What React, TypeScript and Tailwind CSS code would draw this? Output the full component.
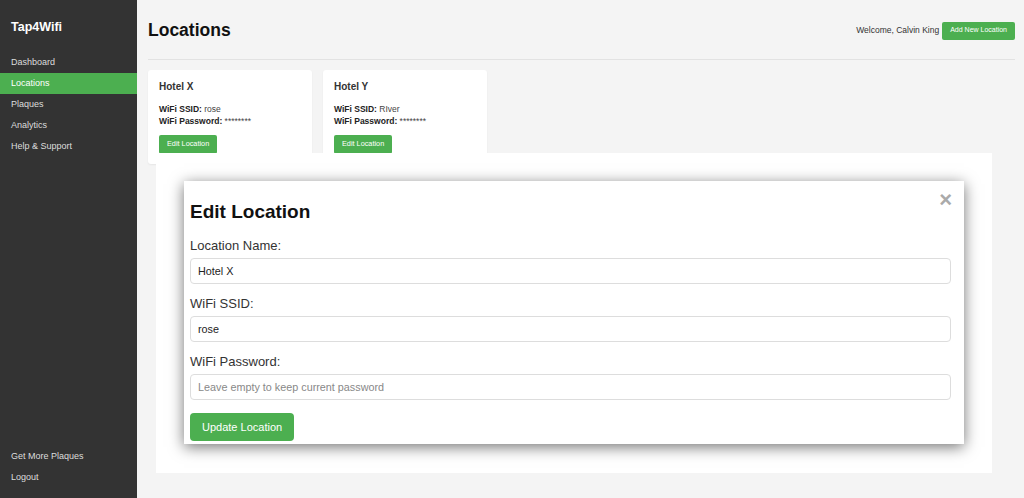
import { useState } from 'react';

type Loc = { id: number; name: string; ssid: string };

const locations: Loc[] = [
  { id: 1, name: 'Hotel X', ssid: 'rose' },
  { id: 2, name: 'Hotel Y', ssid: 'RIver' },
];

const navItems = ['Dashboard', 'Locations', 'Plaques', 'Analytics', 'Help & Support'];

export default function App() {
  const [editing, setEditing] = useState<Loc | null>(locations[0]);
  const [name, setName] = useState(locations[0].name);
  const [ssid, setSsid] = useState(locations[0].ssid);
  const [pwd, setPwd] = useState('');

  const openEdit = (l: Loc) => { setEditing(l); setName(l.name); setSsid(l.ssid); setPwd(''); };

  return (
    <div className="flex h-[498px] w-full bg-[#f4f4f4] text-[#333]" style={{ fontFamily: '"Liberation Sans", Arial, sans-serif' }}>
      {/* Sidebar */}
      <aside className="flex w-[137px] shrink-0 flex-col bg-[#333] pt-[20px] pb-[10px]">
        <div className="px-[11px] text-[12.5px] font-bold leading-[15px] text-white">Tap4Wifi</div>
        <nav className="mt-[17px] flex flex-col">
          {navItems.map(item => (
            <a key={item} className={`flex h-[21px] items-center px-[11px] text-[9px] ${item === 'Locations' ? 'bg-[#4caf50] text-white' : 'text-[#ddd]'}`}>{item}</a>
          ))}
        </nav>
        <div className="mt-auto flex flex-col">
          <a className="flex h-[21px] items-center px-[11px] text-[9px] text-[#ddd]">Get More Plaques</a>
          <a className="flex h-[21px] items-center px-[11px] text-[9px] text-[#ddd]">Logout</a>
        </div>
      </aside>

      {/* Main */}
      <main className="relative flex-1 pl-[11px] pr-[9px] pt-[20px]">
        <div className="flex items-center justify-between border-b border-[#e2e2e2] pb-[18px]">
          <h1 className="text-[17.5px] font-bold leading-[21px] text-[#111]">Locations</h1>
          <div className="flex items-center gap-[3px]">
            <span className="text-[8.5px] text-[#333]">Welcome, Calvin King</span>
            <button className="h-[18px] rounded-[2px] bg-[#4caf50] px-[8px] text-[7px] text-white">Add New Location</button>
          </div>
        </div>

        <div className="mt-[10px] flex gap-[11px]">
          {locations.map(l => (
            <div key={l.id} className="w-[164px] rounded-[3px] bg-white px-[11px] pt-[10px] pb-[10px] shadow-[0_1px_2px_rgba(0,0,0,0.06)]">
              <h3 className="text-[10px] font-bold leading-[13px] text-[#333]">{l.name}</h3>
              <p className="mt-[10px] text-[8.5px] leading-[12px] text-[#444]"><b className="text-[#222]">WiFi SSID:</b> {l.ssid}</p>
              <p className="text-[8.5px] leading-[12px] text-[#444]"><b className="text-[#222]">WiFi Password:</b> ********</p>
              <button onClick={() => openEdit(l)} className="mt-[8px] h-[19px] rounded-[2px] bg-[#4caf50] px-[8px] text-[7.3px] text-white">Edit Location</button>
            </div>
          ))}
        </div>

        {/* Edit modal */}
        {editing && (
          <div className="absolute left-[19px] top-[153px] h-[320px] w-[836px] bg-white p-[28px]">
            <div className="relative h-[263px] w-[780px] bg-white pl-[6px] pr-[13px] pt-[20px] pb-[3px] shadow-[0_3px_14px_rgba(0,0,0,0.55)]">
              <button onClick={() => setEditing(null)} className="absolute right-[12px] top-[8px] text-[22px] font-bold leading-[22px] text-[#aaa]">×</button>
              <h2 className="text-[19px] font-bold leading-[22px] text-[#111]">Edit Location</h2>
              <label className="mt-[15px] block text-[13px] leading-[15px] text-[#333]">Location Name:</label>
              <input value={name} onChange={e => setName(e.target.value)} className="mt-[5px] block h-[26px] w-full rounded-[4px] border border-[#ddd] px-[7px] text-[10.8px] text-[#222] outline-none" />
              <label className="mt-[12px] block text-[13px] leading-[15px] text-[#333]">WiFi SSID:</label>
              <input value={ssid} onChange={e => setSsid(e.target.value)} className="mt-[5px] block h-[26px] w-full rounded-[4px] border border-[#ddd] px-[7px] text-[10.8px] text-[#222] outline-none" />
              <label className="mt-[12px] block text-[13px] leading-[15px] text-[#333]">WiFi Password:</label>
              <input type="password" value={pwd} onChange={e => setPwd(e.target.value)} placeholder="Leave empty to keep current password" className="mt-[5px] block h-[26px] w-full rounded-[4px] border border-[#ddd] px-[7px] text-[10.8px] text-[#222] outline-none placeholder:text-[#888]" />
              <button className="mt-[13px] h-[28px] rounded-[4px] bg-[#4caf50] px-[12px] text-[11px] text-white">Update Location</button>
            </div>
          </div>
        )}
      </main>
    </div>
  );
}
